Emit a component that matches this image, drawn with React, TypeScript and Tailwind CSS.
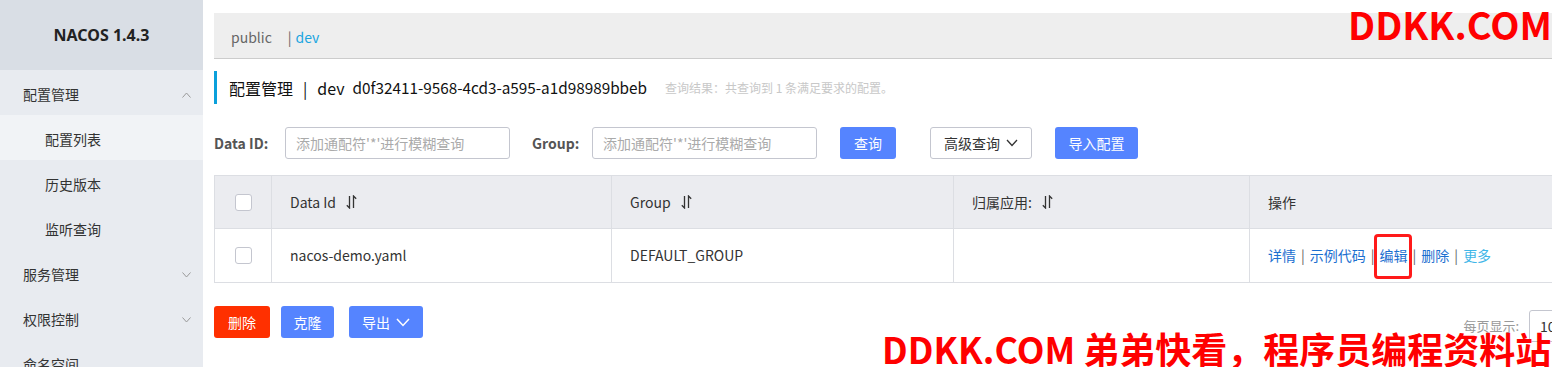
import React from 'react';

const cjk = "font-['Noto_Sans_CJK_SC','Noto_Sans',sans-serif]";

const Chevron = ({ up = false }: { up?: boolean }) => (
  <svg width="9" height="6" viewBox="0 0 9 6" className="text-[#999]">
    <path d={up ? 'M0.5 5.5 L4.5 1 L8.5 5.5' : 'M0.5 0.5 L4.5 5 L8.5 0.5'} fill="none" stroke="currentColor" strokeWidth="1" />
  </svg>
);

const SortIcon = () => (
  <svg width="11" height="14" viewBox="0 0 11 14" className="ml-[10px]">
    <path d="M3.5 1 V13 L0.8 10.3" fill="none" stroke="#333" strokeWidth="1.3" />
    <path d="M7.5 13 V1 L10.2 3.7" fill="none" stroke="#333" strokeWidth="1.3" />
  </svg>
);

const Checkbox = () => (
  <div className="w-[17px] h-[17px] rounded-[3px] border border-[#c4c6cf] bg-white" />
);

const menu = [
  { label: '配置管理', open: true },
  { label: '配置列表', sub: true, active: true },
  { label: '历史版本', sub: true },
  { label: '监听查询', sub: true },
  { label: '服务管理', chevron: true },
  { label: '权限控制', chevron: true },
  { label: '命名空间' },
];

const Sidebar = () => (
  <aside className="w-[203px] shrink-0 bg-[#e8ebf0] flex flex-col overflow-hidden">
    <div className="h-[70px] shrink-0 bg-[#d9dee5] flex items-center justify-center">
      <span className="text-[16px] font-bold text-[#222] font-['Noto_Sans','Liberation_Sans',sans-serif]">NACOS 1.4.3</span>
    </div>
    {menu.map((m) => (
      <div
        key={m.label}
        className={`h-[45px] shrink-0 flex items-center justify-between pt-[4px] pr-[12px] text-[14px] text-[#333] ${m.sub ? 'pl-[45px]' : 'pl-[23px]'} ${m.active ? 'bg-[#f1f3f6]' : ''}`}
      >
        <span>{m.label}</span>
        {m.open && <Chevron up />}
        {m.chevron && <Chevron />}
      </div>
    ))}
  </aside>
);

const Button = ({ children, className = '' }: { children: React.ReactNode; className?: string }) => (
  <button className={`h-[32px] rounded-[3px] text-[14px] text-white flex items-center justify-center ${className}`}>{children}</button>
);

const SearchRow = () => (
  <div className="flex items-center h-[32px] mt-[23px]">
    <span className="text-[14px] font-bold text-[#555] w-[71px]">Data ID:</span>
    <div className="w-[225px] h-[32px] rounded-[3px] border border-[#c4c6cf] flex items-center pl-[10px] text-[14px] text-[#aaa]">添加通配符'*'进行模糊查询</div>
    <span className="text-[14px] font-bold text-[#555] ml-[22px] w-[60px]">Group:</span>
    <div className="w-[225px] h-[32px] rounded-[3px] border border-[#c4c6cf] flex items-center pl-[10px] text-[14px] text-[#aaa]">添加通配符'*'进行模糊查询</div>
    <Button className="ml-[23px] w-[56px] bg-[#5584ff]">查询</Button>
    <button className="ml-[34px] w-[102px] h-[32px] rounded-[3px] border border-[#c4c6cf] bg-white text-[14px] text-[#333] flex items-center justify-center gap-[6px]">
      高级查询
      <svg width="12" height="8" viewBox="0 0 12 8"><path d="M1 1 L6 6.5 L11 1" fill="none" stroke="#333" strokeWidth="1.3" /></svg>
    </button>
    <Button className="ml-[23px] w-[83px] bg-[#5584ff]">导入配置</Button>
  </div>
);

const Table = () => (
  <div className="mt-[16px] border border-[#dcdee3] text-[14px] text-[#333]">
    <div className="flex h-[53px] bg-[#ebecf0] border-b border-[#dcdee3]">
      <div className="w-[57px] shrink-0 flex items-center justify-center border-r border-[#dcdee3]"><Checkbox /></div>
      <div className="w-[340px] shrink-0 flex items-center pl-[18px] border-r border-[#dcdee3]">Data Id<SortIcon /></div>
      <div className="w-[342px] shrink-0 flex items-center pl-[18px] border-r border-[#dcdee3]">Group<SortIcon /></div>
      <div className="w-[296px] shrink-0 flex items-center pl-[18px] border-r border-[#dcdee3]">归属应用:<SortIcon /></div>
      <div className="w-[330px] shrink-0 flex items-center pl-[18px]">操作</div>
    </div>
    <div className="flex h-[53px]">
      <div className="w-[57px] shrink-0 flex items-center justify-center border-r border-[#dcdee3]"><Checkbox /></div>
      <div className="w-[340px] shrink-0 flex items-center pl-[18px] border-r border-[#dcdee3]">nacos-demo.yaml</div>
      <div className="w-[342px] shrink-0 flex items-center pl-[18px] border-r border-[#dcdee3]">DEFAULT_GROUP</div>
      <div className="w-[296px] shrink-0 border-r border-[#dcdee3]" />
      <div className="w-[330px] shrink-0 flex items-center pl-[18px] gap-[5px] text-[#1c6fd0]">
        <span>详情</span><span className="text-[#666]">|</span>
        <span>示例代码</span><span className="text-[#666]">|</span>
        <span>编辑</span><span className="text-[#666]">|</span>
        <span>删除</span><span className="text-[#666]">|</span>
        <span className="text-[#3fb6e8]">更多</span>
      </div>
    </div>
  </div>
);

export default function App() {
  return (
    <div className={`relative w-[1552px] h-[367px] overflow-hidden flex bg-white ${cjk}`}>
      <Sidebar />
      <main className="flex-1 overflow-hidden pl-[11px] pt-[13px]">
        <div className="w-[1365px]">
          <div className="h-[46px] bg-[#eeeeee] border-b border-[#cccccc] flex items-center pl-[17px] pt-[4px] text-[14px]">
            <span className="text-[#666]">public</span>
            <span className="ml-[16px] text-[#666]">|</span>
            <span className="ml-[4px] text-[#1ba5e0]">dev</span>
          </div>
          <div className="mt-[12px] h-[33px] border-l-[3px] border-[#0ba0db] flex items-center pl-[12px] text-[16px] text-[#111]">
            <span>配置管理</span>
            <span className="mx-[10px]">|</span>
            <span>dev</span>
            <span className="ml-[8px] text-[15.3px]">d0f32411-9568-4cd3-a595-a1d98989bbeb</span>
            <span className="ml-[18px] text-[12px] text-[#c8c8c8]">查询结果：共查询到 1 条满足要求的配置。</span>
          </div>
          <SearchRow />
          <Table />
          <div className="mt-[23px] flex justify-between">
            <div className="flex gap-[11px]">
              <Button className="w-[56px] bg-[#ff3000]">删除</Button>
              <Button className="w-[53px] bg-[#5584ff]">克隆</Button>
              <Button className="ml-[4px] w-[74px] bg-[#5584ff] gap-[6px]">
                导出
                <svg width="14" height="9" viewBox="0 0 14 9"><path d="M1 1 L7 7.5 L13 1" fill="none" stroke="#fff" strokeWidth="1.5" /></svg>
              </Button>
            </div>
            <div className="mt-[4px] flex items-center">
              <span className="text-[13px] text-[#999] mr-[10px]">每页显示:</span>
              <div className="w-[50px] h-[32px] rounded-[3px] border border-[#c4c6cf] flex items-center pl-[10px] text-[14px] text-[#333]">10</div>
            </div>
          </div>
        </div>
      </main>

      <div className="absolute left-[1374px] top-[234px] w-[38px] h-[45px] border-[3px] border-[#ff1a1a] rounded-[4px]" />
      <div className="absolute left-[1348px] top-[2px] text-[38px] leading-[44px] font-bold text-[#ff0000]">DDKK.COM</div>
      <div className="absolute left-[882px] top-[326px] text-[36px] leading-[44px] font-bold text-[#ff0000] whitespace-nowrap">DDKK.COM 弟弟快看，程序员编程资料站</div>
    </div>
  );
}
